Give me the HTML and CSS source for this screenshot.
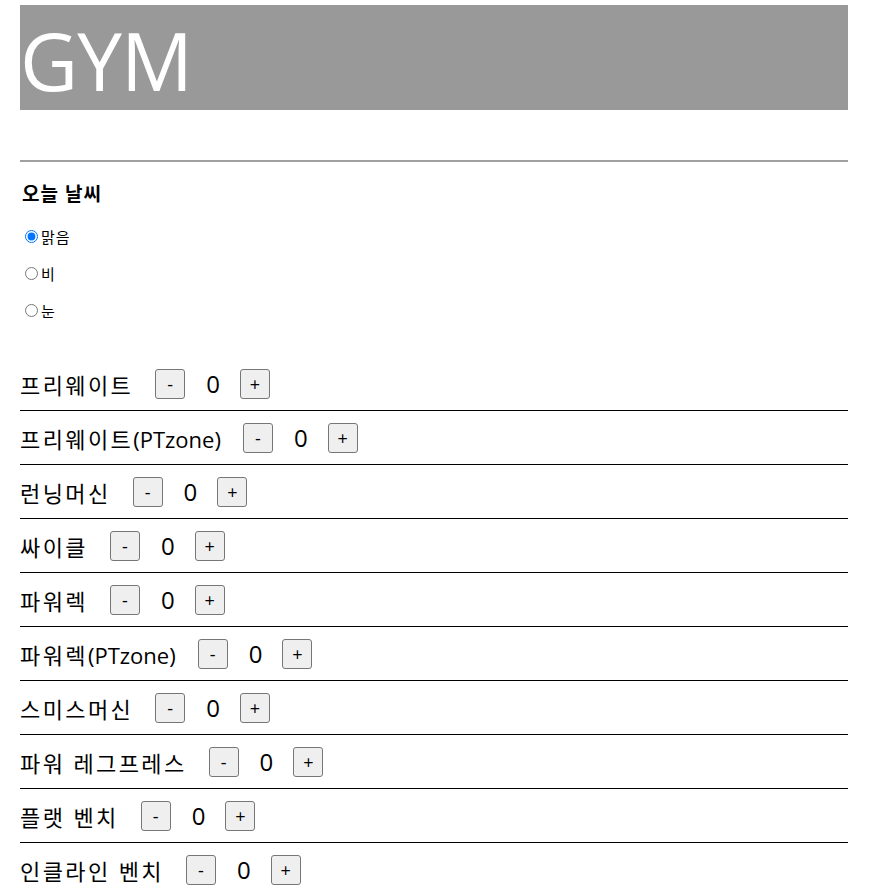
FILE: index.html
```html
<!DOCTYPE html>
<html lang="ko">
<head>
<meta charset="utf-8">
<title>GYM</title>
<link rel="stylesheet" href="styles.css">
</head>
<body>
<div class="page">
  <header class="header"><h1 class="title">GYM</h1></header>
  <hr class="divider">
  <section class="weather">
    <h3 class="weather-title">오늘 날씨</h3>
    <label class="option"><input type="radio" name="w" checked>맑음</label>
    <label class="option"><input type="radio" name="w">비</label>
    <label class="option"><input type="radio" name="w">눈</label>
  </section>
  <ul class="list">
    <li class="row"><span class="name">프리웨이트</span><button class="btn">-</button><span class="count">0</span><button class="btn">+</button></li>
    <li class="row"><span class="name">프리웨이트<span class="latin">(PTzone)</span></span><button class="btn">-</button><span class="count">0</span><button class="btn">+</button></li>
    <li class="row"><span class="name">런닝머신</span><button class="btn">-</button><span class="count">0</span><button class="btn">+</button></li>
    <li class="row"><span class="name">싸이클</span><button class="btn">-</button><span class="count">0</span><button class="btn">+</button></li>
    <li class="row"><span class="name">파워렉</span><button class="btn">-</button><span class="count">0</span><button class="btn">+</button></li>
    <li class="row"><span class="name">파워렉<span class="latin">(PTzone)</span></span><button class="btn">-</button><span class="count">0</span><button class="btn">+</button></li>
    <li class="row"><span class="name">스미스머신</span><button class="btn">-</button><span class="count">0</span><button class="btn">+</button></li>
    <li class="row"><span class="name">파워 레그프레스</span><button class="btn">-</button><span class="count">0</span><button class="btn">+</button></li>
    <li class="row"><span class="name">플랫 벤치</span><button class="btn">-</button><span class="count">0</span><button class="btn">+</button></li>
    <li class="row"><span class="name">인클라인 벤치</span><button class="btn">-</button><span class="count">0</span><button class="btn">+</button></li>
  </ul>
</div>
</body>
</html>
```

FILE: styles.css
```css
html, body {
  margin: 0;
  padding: 0;
  background: #fff;
}
body {
  font-family: "Open Sans", "Noto Sans CJK KR", sans-serif;
  color: #000;
}
.page {
  width: 828px;
  margin: 0 0 0 20px;
  padding-top: 5px;
}
.header {
  background: #999999;
  height: 105px;
  display: flex;
  align-items: flex-end;
}
.title {
  margin: 0;
  color: #fff;
  font-size: 80px;
  font-weight: 400;
  line-height: 1;
  padding: 0 0 10px 0;
  letter-spacing: -1px;
}
.divider {
  margin: 50px 0 0 0;
  border: 0;
  border-top: 2px solid #a0a0a0;
  height: 0;
}
.weather {
  padding-top: 20px;
}
.weather-title {
  margin: 0 0 12px 2px;
  font-size: 19px;
  font-weight: 700;
  line-height: 24px;
  letter-spacing: 1px;
}
.option {
  display: flex;
  align-items: center;
  font-size: 15px;
  height: 37px;
  margin-left: 2px;
  letter-spacing: 1px;
}
.option input {
  margin: 0 3px 0 3px;
  width: 13px;
  height: 13px;
}
.list {
  list-style: none;
  margin: 28px 0 0 0;
  padding: 0;
}
.row {
  display: flex;
  align-items: center;
  height: 53px;
  border-bottom: 1px solid #000;
  font-size: 22px;
}
.name {
  margin-right: 22px;
  letter-spacing: 2.4px;
}
.latin {
  letter-spacing: 0;
}
.btn {
  width: 30px;
  height: 30px;
  padding: 0;
  background: #efefef;
  border: 1px solid #767676;
  border-radius: 3px;
  font-family: "Open Sans", sans-serif;
  font-size: 18px;
  line-height: 1;
  color: #000;
}
.count {
  font-size: 24px;
  margin: 0 20px 0 21px;
}
```
